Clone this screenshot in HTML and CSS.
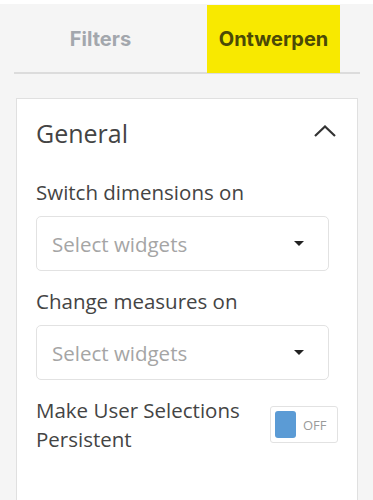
FILE: index.html
```html
<!DOCTYPE html>
<html lang="nl">
<head>
    <meta charset="UTF-8">
    <meta name="viewport" content="width=device-width, initial-scale=1.0">
    <title>Ontwerpen</title>
    <link rel="stylesheet" href="styles.css">
</head>
<body>
    <!-- Tabs -->
    <div class="tabs">
        <a href="#" class="tab">Filters</a>
        <a href="#" class="tab active">Ontwerpen</a>
    </div>

    <!-- Panel -->
    <div class="panel">
        <div class="panel-header">
            <h2>General</h2>
            <svg class="chevron" width="22" height="12" viewBox="0 0 22 12">
                <path d="M1 11 L11 1.5 L21 11" fill="none" stroke="#333" stroke-width="2.2"/>
            </svg>
        </div>

        <div class="field">
            <label>Switch dimensions on</label>
            <div class="select">
                <span>Select widgets</span>
                <span class="caret"></span>
            </div>
        </div>

        <div class="field">
            <label>Change measures on</label>
            <div class="select">
                <span>Select widgets</span>
                <span class="caret"></span>
            </div>
        </div>

        <div class="field-row">
            <label>Make User Selections Persistent</label>
            <div class="toggle">
                <span class="knob"></span>
                <span class="toggle-text">OFF</span>
            </div>
        </div>
    </div>
</body>
</html>
```

FILE: styles.css
```css
* {
    margin: 0;
    padding: 0;
    box-sizing: border-box;
    font-family: "Open Sans", Arial, sans-serif;
}

body {
    background-color: #f5f5f5;
    border-top: 4px solid #fff;
    height: 100vh;
    overflow: hidden;
}

/* Tabs */
.tabs {
    display: flex;
    margin: 1px 13px 0 14px;
    border-bottom: 2px solid #dcdcdc;
    height: 69px;
}

.tab {
    display: flex;
    align-items: center;
    justify-content: center;
    text-decoration: none;
    font-family: Inter, Arial, sans-serif;
    font-weight: 700;
    font-size: 20px;
    color: #a3a7ad;
}

.tab:first-child {
    width: 173px;
}

.tab.active {
    margin-left: 20px;
    width: 133px;
    background-color: #f8e900;
    color: #4b4a06;
    margin-bottom: -1px;
}

/* Panel */
.panel {
    margin: 24px 15px 0 16px;
    background-color: #fff;
    border: 1px solid #e0e0e0;
    border-bottom: none;
    height: 420px;
    padding: 14px 28px 0 19px;
}

.panel-header {
    display: flex;
    justify-content: space-between;
    align-items: center;
    height: 40px;
    margin-bottom: 25px;
}

.panel-header h2 {
    font-weight: 400;
    font-size: 25px;
    color: #444;
}

.chevron {
    margin-right: -7px;
    margin-top: -4px;
}

.field {
    margin-bottom: 16px;
}

.field label,
.field-row label {
    display: block;
    font-size: 20.5px;
    color: #444;
    line-height: 29px;
    margin-bottom: 9px;
}

.select {
    height: 55px;
    border: 1px solid #e2e2e2;
    border-radius: 5px;
    display: flex;
    align-items: center;
    justify-content: space-between;
    padding: 0 24px 0 15px;
    font-size: 20.5px;
    color: #a5a5a5;
}

.caret {
    width: 0;
    height: 0;
    border-left: 5px solid transparent;
    border-right: 5px solid transparent;
    border-top: 5px solid #222;
}

.field-row {
    display: flex;
    justify-content: space-between;
    align-items: flex-start;
}

.field-row label {
    width: 230px;
}

.toggle {
    width: 68px;
    height: 37px;
    margin: 10px -9px 0 0;
    border: 1px solid #e2e2e2;
    border-radius: 3px;
    display: flex;
    align-items: center;
    padding: 0 4px;
    gap: 7px;
}

.knob {
    width: 21px;
    height: 27px;
    background-color: #5b9bd5;
    border-radius: 3px;
}

.toggle-text {
    font-size: 13px;
    color: #9a9a9a;
}
```
